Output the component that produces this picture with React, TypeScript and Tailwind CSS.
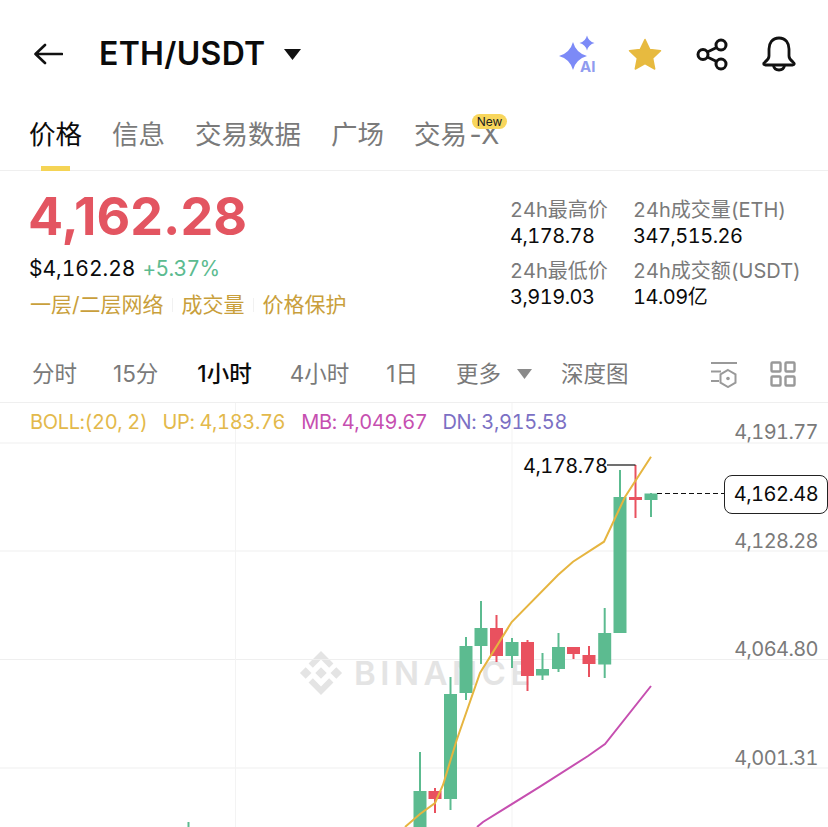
const candles = [
  { x: 420, top: 791, bottom: 840, high: 752, low: 840, up: true },
  { x: 435, top: 791, bottom: 799, high: 788, low: 813, up: false },
  { x: 450.5, top: 694, bottom: 799, high: 677, low: 810, up: true },
  { x: 466, top: 646, bottom: 693, high: 637, low: 700, up: true },
  { x: 481, top: 628, bottom: 646, high: 601, low: 664, up: true },
  { x: 496.5, top: 628, bottom: 656, high: 615, low: 662, up: false },
  { x: 512, top: 642, bottom: 656, high: 638, low: 668, up: true },
  { x: 527.5, top: 642, bottom: 676, high: 640, low: 691, up: false },
  { x: 542.5, top: 669, bottom: 675.5, high: 653, low: 680, up: true },
  { x: 558.5, top: 647, bottom: 669, high: 633, low: 672, up: true },
  { x: 573.5, top: 647, bottom: 654, high: 647, low: 659, up: false },
  { x: 589, top: 655, bottom: 664, high: 646, low: 677, up: false },
  { x: 604.7, top: 633, bottom: 664.5, high: 608, low: 678, up: true },
  { x: 620, top: 497, bottom: 633, high: 470, low: 497, up: true },
  { x: 635.5, top: 497, bottom: 500, high: 465, low: 518, up: false },
  { x: 651, top: 493.5, bottom: 500, high: 493, low: 517, up: true },
];

const axisLabels = [
  { text: "4,191.77", pos: "top-[16px]" },
  { text: "4,128.28", pos: "top-[125px]" },
  { text: "4,064.80", pos: "top-[233px]" },
  { text: "4,001.31", pos: "top-[342px]" },
];

const stats = [
  { label: "24h最高价", value: "4,178.78" },
  { label: "24h成交量(ETH)", value: "347,515.26" },
  { label: "24h最低价", value: "3,919.03" },
  { label: "24h成交额(USDT)", value: "14.09亿" },
];

export default function App() {
  return (
    <div className="w-[828px] h-[827px] overflow-hidden bg-white text-[#0b0b0b] tabular-nums font-['Inter','Noto_Sans_CJK_SC',sans-serif]">
      {/* Top bar */}
      <header className="h-[108px] flex items-center pl-[34px]">
        <svg width="29" height="22" viewBox="0 0 29 22" fill="none" stroke="#111" strokeWidth="2.6" strokeLinecap="round" strokeLinejoin="round">
          <path d="M28 11H2M11 2l-9.500 9 9.500 9" />
        </svg>
        <span className="ml-[36px] text-[32px] font-semibold tracking-[0.3px]">ETH/USDT</span>
        <svg className="ml-[19px]" width="17" height="11" viewBox="0 0 17 11" fill="#111">
          <path d="M0 0h17L8.500 11z" />
        </svg>
        <div className="ml-auto mr-[32px] flex items-center">
          <div className="relative w-[40px] h-[40px]">
            <svg width="40" height="40" viewBox="0 0 40 40">
              <path d="M15 8Q18 19 29 22Q18 25 15 36Q12 25 1 22Q12 19 15 8Z" fill="#7C8AF7" />
              <path d="M29 1.500Q30.500 7.500 36.500 9Q30.500 10.500 29 16.500Q27.500 10.500 21.500 9Q27.500 7.500 29 1.500Z" fill="#7C8AF7" />
            </svg>
            <span className="absolute left-[22px] top-[25px] text-[15px] leading-[16px] font-bold text-[#8F9BEF]">AI</span>
          </div>
          <svg className="ml-[30px]" width="34" height="33" viewBox="0 0 34 33" fill="#E7BA3F">
            <path d="M17 1.500l4.800 10 10.700 1.300-7.900 7.400 2.100 10.800L17 25.700 7.300 31l2.100-10.800L1.500 12.800l10.700-1.300z" stroke="#E7BA3F" strokeWidth="1.500" strokeLinejoin="round" />
          </svg>
          <svg className="ml-[33px]" width="34" height="34" viewBox="0 0 34 34" fill="none" stroke="#111" strokeWidth="3">
            <circle cx="26" cy="8" r="5" />
            <circle cx="8" cy="17.500" r="5" />
            <circle cx="26" cy="27" r="5" />
            <path d="M12.300 15L21.700 10.500M12.300 20L21.700 24.500" />
          </svg>
          <svg className="ml-[33px]" width="34" height="36" viewBox="0 0 34 36" fill="none" stroke="#111" strokeWidth="2.800" strokeLinejoin="round">
            <path d="M17 2C10 2 7 7.500 7 13v7c0 2-1 4-4 6-2 1.500-1.500 3 .5 3h27c2 0 2.500-1.500.5-3-3-2-4-4-4-6v-7C27 7.500 24 2 17 2Z" />
            <path d="M11.500 29.500c.5 3 3 4.500 5.500 4.500s5-1.500 5.500-4.500" />
          </svg>
        </div>
      </header>

      {/* Tabs */}
      <nav className="h-[63px] flex gap-[30px] pl-[29px] border-b border-[#efefef] text-[26.5px] text-[#7a7a7a]">
        <div className="relative h-[63px] leading-[53px] text-[#0b0b0b]">
          价格
          <div className="absolute left-[12px] bottom-0 w-[29px] h-[5px] bg-[#F5D455]" />
        </div>
        <div className="leading-[53px]">信息</div>
        <div className="leading-[53px]">交易数据</div>
        <div className="leading-[53px]">广场</div>
        <div className="relative leading-[53px]">
          交易<span className="tracking-[-3px]">-X</span>
          <span className="absolute left-[58px] top-[6px] w-[35px] h-[15px] rounded-full bg-[#F8D65C] text-[12px] leading-[15px] text-center text-[#222]">New</span>
        </div>
      </nav>

      {/* Price and stats */}
      <section className="h-[172px] flex">
        <div className="w-[510px] pl-[30px]">
          <div className="mt-[14px] -ml-[2px] text-[52px] leading-[64px] font-bold normal-nums text-[#E35561]">4,162.28</div>
          <div className="mt-[5px] -ml-px flex gap-[7px] text-[21px] leading-[30px]">
            <span>$4,162.28</span>
            <span className="tracking-[-0.6px] text-[#5CBB90]">+5.37%</span>
          </div>
          <div className="mt-[6px] flex items-center text-[21px] leading-[30px] text-[#C99F3C]">
            <span>一层/二层网络</span>
            <span className="mx-[8.5px] w-px h-[14px] bg-[#f1f1f1]" />
            <span>成交量</span>
            <span className="mx-[8.5px] w-px h-[14px] bg-[#f1f1f1]" />
            <span>价格保护</span>
          </div>
        </div>
        <div className="mt-[26px] grid grid-cols-[123px_1fr] gap-y-[8px] content-start text-[20px] leading-[27px]">
          {stats.map((s) => (
            <div key={s.label}>
              <div className="text-[#7a7a7a]">{s.label}</div>
              <div className="-mt-px tracking-[-0.5px]">{s.value}</div>
            </div>
          ))}
        </div>
      </section>

      {/* Period selector */}
      <div className="h-[60px] flex items-center pl-[32px] pt-[3px] border-b border-[#efefef] text-[22.5px] normal-nums text-[#7a7a7a]">
        <span>分时</span>
        <span className="ml-[36px]">15分</span>
        <span className="ml-[39px] font-medium text-[#0b0b0b]">1小时</span>
        <span className="ml-[38px]">4小时</span>
        <span className="ml-[37px]">1日</span>
        <span className="ml-[38px]">更多</span>
        <svg className="ml-[16px]" width="15" height="10" viewBox="0 0 15 10" fill="#8a8a8a">
          <path d="M0 0h15L7.500 10z" />
        </svg>
        <span className="ml-[29px]">深度图</span>
        <svg className="ml-[82px]" width="28" height="27" viewBox="0 0 28 27" fill="none" stroke="#999" strokeWidth="2">
          <path d="M1 2h26M1 10.500h10M1 20h8" />
          <path d="M18 10l7.500 4.300v8.400L18 27l-7.500-4.300v-8.400z" transform="translate(0 -1)" />
          <circle cx="18" cy="17.500" r="1.800" fill="#999" stroke="none" />
        </svg>
        <svg className="ml-[32px]" width="26" height="26" viewBox="0 0 26 26" fill="none" stroke="#999" strokeWidth="2.400">
          <rect x="1.500" y="1.500" width="9" height="9" rx="1" />
          <rect x="15.500" y="1.500" width="9" height="9" rx="1" />
          <rect x="1.500" y="15.500" width="9" height="9" rx="1" />
          <rect x="15.500" y="15.500" width="9" height="9" rx="1" />
        </svg>
      </div>

      {/* Chart */}
      <div className="relative h-[424px]">
        {/* watermark */}
        <div className="absolute left-[299px] top-[248px] flex items-center">
          <svg width="44" height="44" viewBox="0 0 46 46" fill="#e4e4e4">
            <path d="M23 0L36 13l-4.500 4.500L23 9l-8.500 8.500L10 13z" />
            <path d="M23 46L10 33l4.500-4.500L23 37l8.500-8.500L36 33z" />
            <path d="M23 17l6 6-6 6-6-6z" />
            <path d="M7 17l6 6-6 6-6-6zM39 17l6 6-6 6-6-6z" />
          </svg>
          <span className="ml-[11px] text-[33px] leading-[40px] font-semibold tracking-[4.5px] text-[#e4e4e4]">BINANCE</span>
        </div>

        <svg className="absolute inset-0" width="828" height="424" viewBox="0 403 828 424" fill="none">
          {[443, 551, 659.500, 768].map((y) => (
            <path key={y} d={`M0 ${y}H828`} stroke="#efefef" strokeWidth="1" />
          ))}
          {[235.500, 512].map((x) => (
            <path key={x} d={`M${x} 403V827`} stroke="#f3f3f3" strokeWidth="1" />
          ))}
          <path d="M188.500 822V827" stroke="#5CBB90" strokeWidth="2" />
          {candles.map((c) => {
            const color = c.up ? "#5CBB90" : "#E9515F";
            return (
              <g key={c.x}>
                <path d={`M${c.x} ${c.high}V${c.low}`} stroke={color} strokeWidth="2" />
                <rect x={c.x - 6.500} y={c.top} width="13" height={c.bottom - c.top} fill={color} />
              </g>
            );
          })}
          <path d="M405 827L420 814L435 803L443 785L456.700 740L480 673L511.700 622L558 575L573 561.700L604 541.700L625 497L651 456.700" stroke="#E6B540" strokeWidth="2" />
          <path d="M477 827L483 822L540 786.700L588 756L605 744L651 686" stroke="#C64FB0" strokeWidth="2" />
          <path d="M607 465H635.500" stroke="#111" strokeWidth="1.200" />
          <path d="M657 493.500H724" stroke="#111" strokeWidth="1.200" strokeDasharray="5 3" />
        </svg>

        <div className="relative pl-[30px] h-[37px] flex items-center text-[20px] tracking-[-0.35px] text-[#E3B94B]">
          <span>BOLL:(20, 2)</span>
          <span className="ml-[15px]">UP: 4,183.76</span>
          <span className="ml-[16px] text-[#C64FB0]">MB: 4,049.67</span>
          <span className="ml-[15px] text-[#7B70C4]">DN: 3,915.58</span>
        </div>

        {axisLabels.map((l) => (
          <span key={l.text} className={`absolute right-[10px] ${l.pos} text-[20px] leading-[26px] tracking-[-0.6px] text-[#7a7a7a]`}>
            {l.text}
          </span>
        ))}

        <span className="absolute left-[523px] top-[50px] text-[20px] leading-[26px] tracking-[-0.5px]">4,178.78</span>
        <span className="absolute left-[724px] top-[72px] w-[104px] h-[39px] border border-[#222] rounded-[8px] bg-white text-[20px] leading-[37px] tracking-[-0.5px] text-center">4,162.48</span>
      </div>
    </div>
  );
}
